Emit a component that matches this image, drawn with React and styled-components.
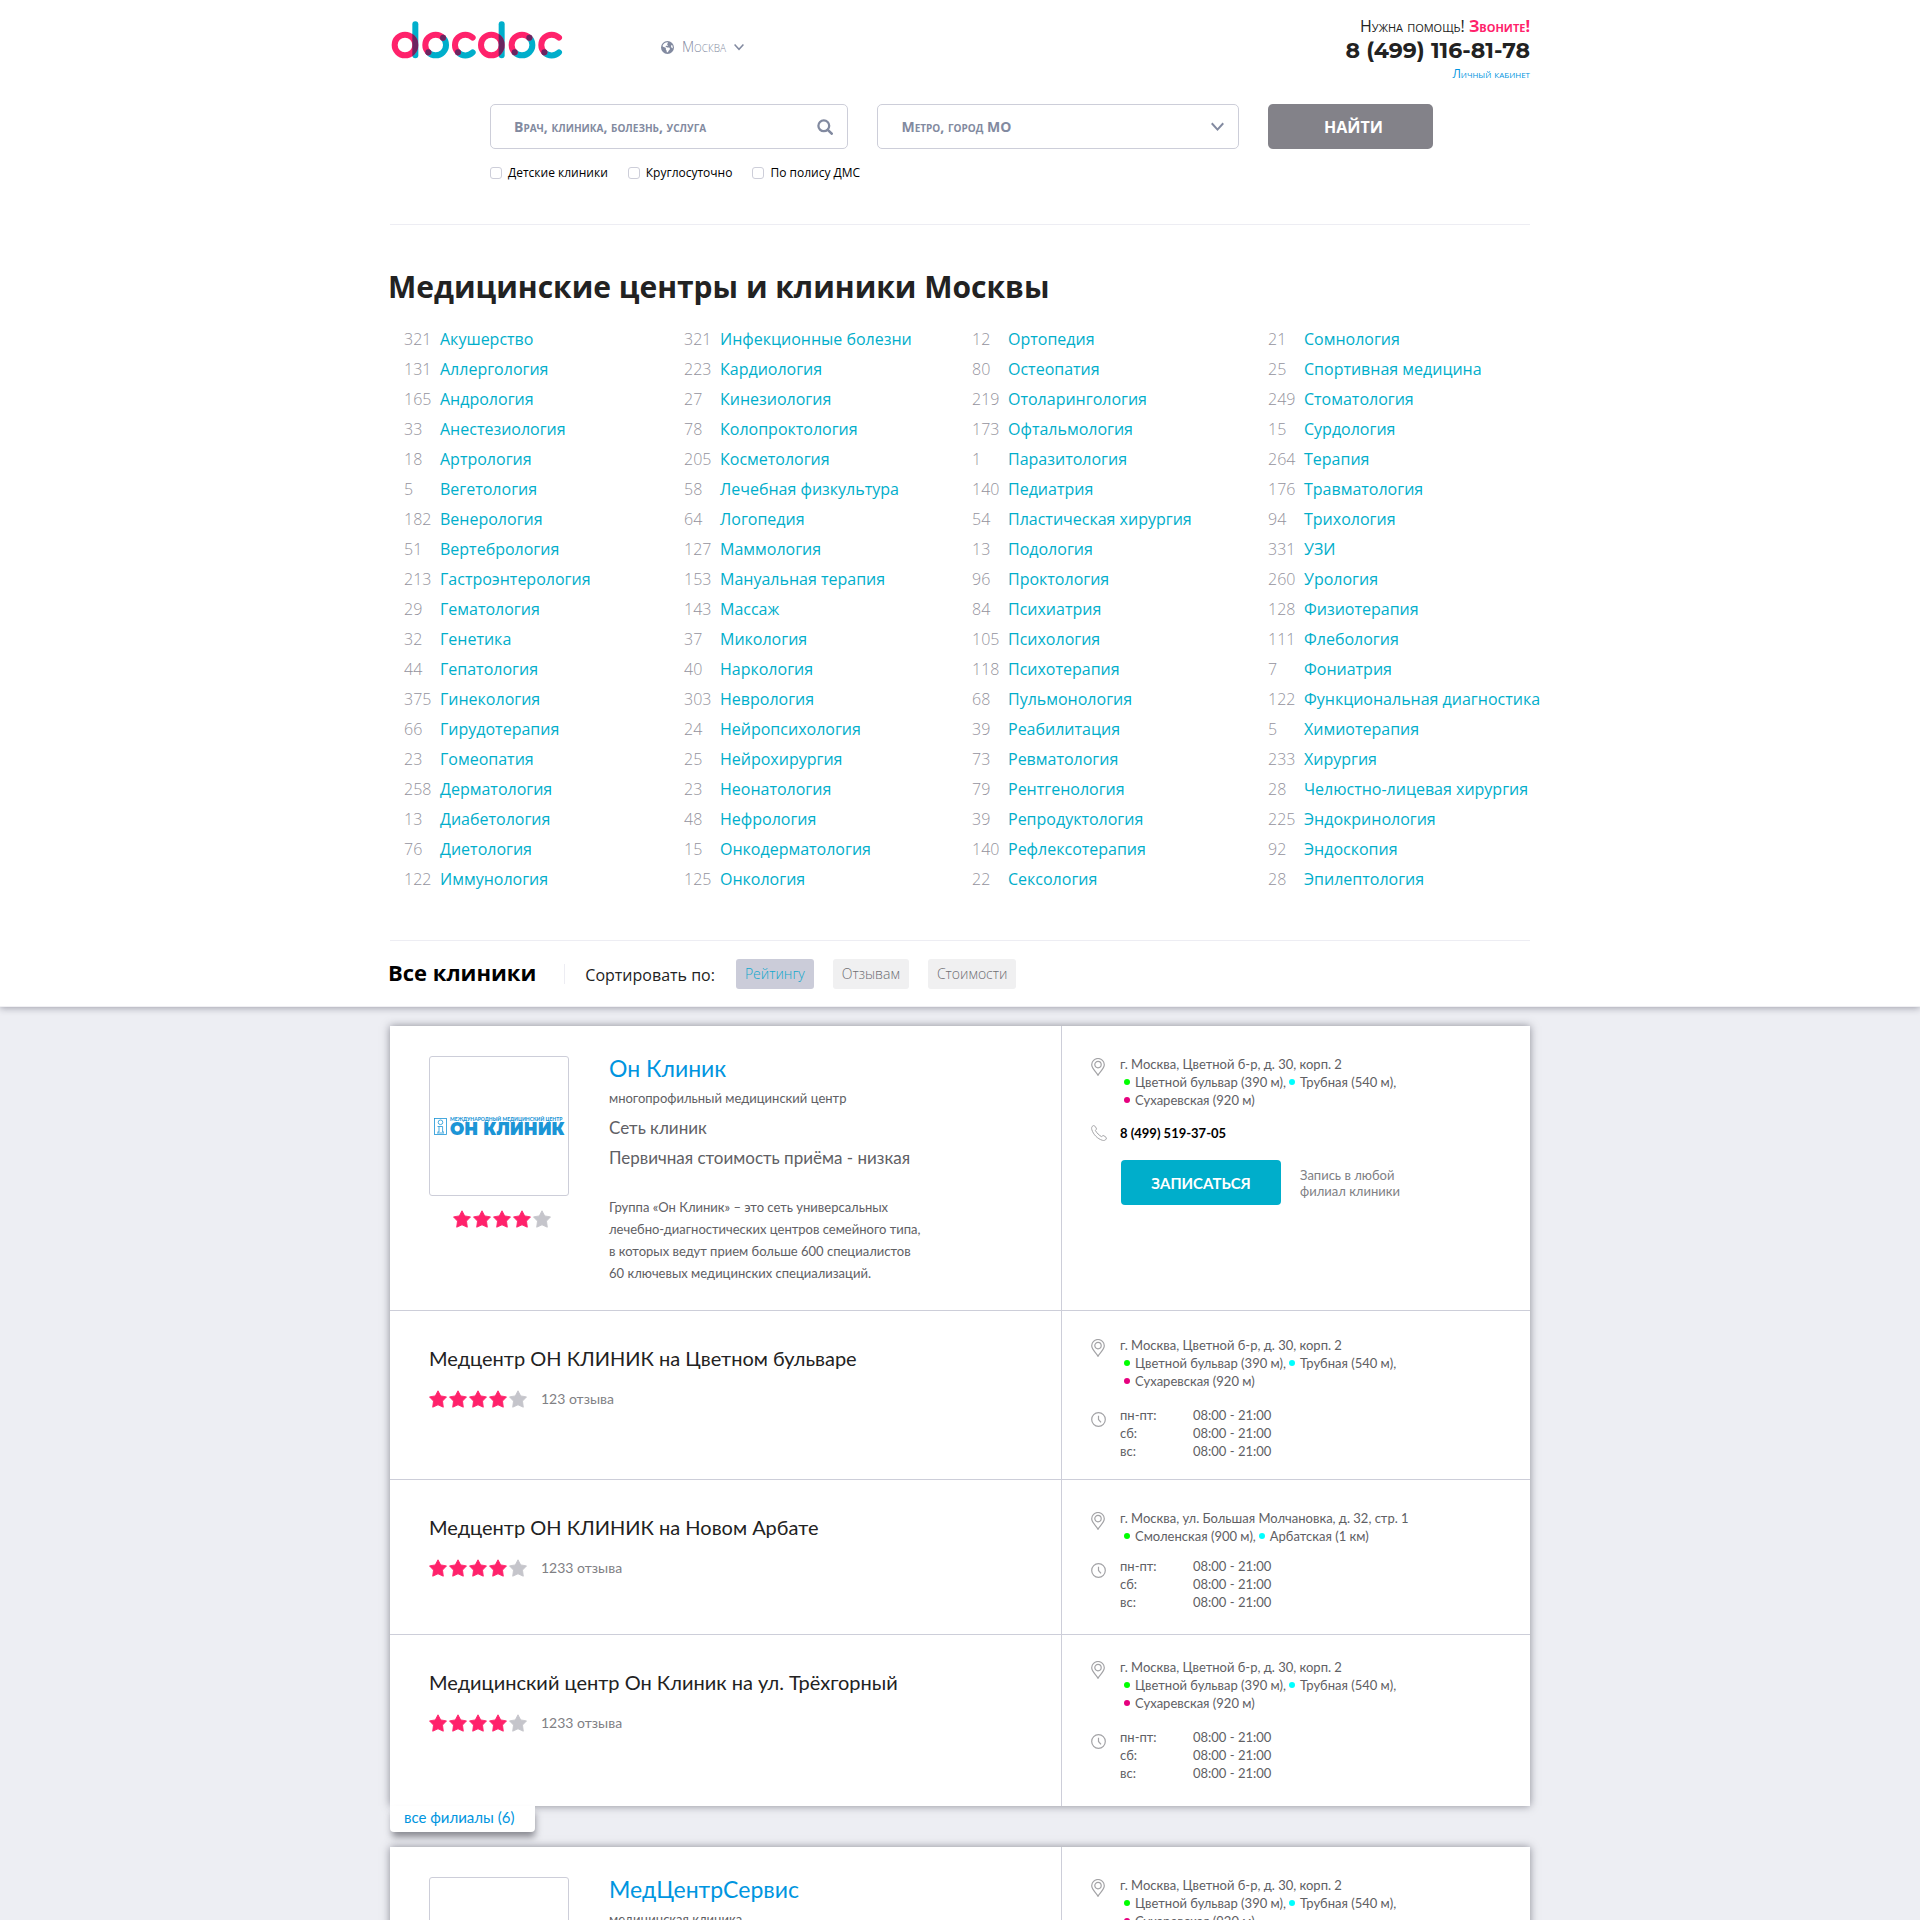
import React from "react";
import styled, { createGlobalStyle } from "styled-components";
import { FaEarthAmericas } from "react-icons/fa6";

const color = {
  pink: "#ff226b",
  teal: "#00aecb",
  plum: "#6b2560",
  blue: "#0095e0",
  slate: "#828aa0",
  line: "#cdced9",
  text: "#606064",
  muted: "#808084",
  ink: "#222222",
};
const sans = `"Open Sans", "Noto Sans", sans-serif`;
const humanist = `Lato, Carlito, "Open Sans", sans-serif`;

const GlobalStyle = createGlobalStyle`
  *, *::before, *::after { box-sizing: border-box; }
  html { scrollbar-width: none; }
  body { margin: 0; background: #edeef3; font-family: ${sans}; color: ${color.ink}; }
  h1, h2, h3, p, ul, dl, dd { margin: 0; padding: 0; }
  ul { list-style: none; }
  a { color: inherit; text-decoration: none; }
  button, input, select { font: inherit; }
`;

/* ---------- page shell ---------- */

const Top = styled.div`
  background: #fff;
  border-bottom: 1px solid #f0f0f3;
  box-shadow: 0 1px 7px rgba(40, 40, 60, 0.4);
`;

const Container = styled.div`
  max-width: 1140px;
  margin: 0 auto;
`;

const Rule = styled.hr`
  margin: 0;
  border: 0;
  border-top: 1px solid #ededf3;
`;

/* ---------- header ---------- */

const Header = styled.header`
  display: flex;
  align-items: flex-start;
  padding-top: 16px;
`;

const LogoLink = styled.a`
  display: block;
  margin: 5px 98px 0 1px;

  svg { display: block; }
`;

const CityButton = styled.button`
  display: flex;
  align-items: center;
  gap: 8px;
  margin-top: 20px;
  padding: 0;
  border: 0;
  background: none;
  color: ${color.slate};
  font-size: 14px;
  line-height: 22px;
  font-weight: 300;
  font-variant: small-caps;

  svg { display: block; }
`;

const Contacts = styled.address`
  margin-left: auto;
  text-align: right;
  font-style: normal;
`;

const Help = styled.p`
  font-size: 16px;
  line-height: 21px;
  font-variant: small-caps;

  strong { font-weight: 700; color: ${color.pink}; }
`;

const Phone = styled.a`
  display: block;
  font-family: Montserrat, Lato, sans-serif;
  font-size: 22px;
  line-height: 28px;
  font-weight: 700;
`;

const AccountLink = styled.a`
  display: block;
  font-size: 12px;
  line-height: 18px;
  font-variant: small-caps;
  color: ${color.blue};
`;

/* ---------- search ---------- */

const SearchForm = styled.form`
  padding: 21px 97px 41px 100px;
`;

const SearchRow = styled.div`
  display: grid;
  grid-template-columns: 358fr 361fr 165px;
  gap: 29px;
`;

const Field = styled.label`
  display: flex;
  align-items: center;
  height: 45px;
  padding-right: 14px;
  border: 1px solid ${color.line};
  border-radius: 5px;
  color: ${color.slate};

  svg { display: block; flex: none; }
`;

const fieldText = `
  flex: 1;
  min-width: 0;
  height: 43px;
  padding: 0 0 0 23px;
  border: 0;
  outline: 0;
  background: none;
  color: inherit;
  font-size: 14px;
  font-weight: 700;
  font-variant: small-caps;
`;

const TextInput = styled.input`
  ${fieldText}
  &::placeholder { color: inherit; opacity: 1; }
`;

const Select = styled.select`
  ${fieldText}
  appearance: none;
`;

const FindButton = styled.button`
  height: 45px;
  padding: 0 0 0 6px;
  border: 0;
  border-radius: 5px;
  background: #838289;
  color: #fff;
  font-size: 16px;
  font-weight: 700;
`;

const Filters = styled.div`
  display: flex;
  gap: 20px;
  margin-top: 14px;
`;

const CheckLabel = styled.label`
  display: flex;
  align-items: center;
  gap: 6px;
  font-size: 12px;
  line-height: 20px;
  color: #000;
`;

const Checkbox = styled.input.attrs({ type: "checkbox" })`
  appearance: none;
  width: 12px;
  height: 12px;
  margin: 0;
  border: 1px solid ${color.line};
  border-radius: 3px;
  background: #fff;

  &:checked { background: ${color.teal}; }
`;

/* ---------- specialities ---------- */

const PageTitle = styled.h1`
  margin: 42px 0 17px -2px;
  font-size: 30px;
  line-height: 40px;
  font-weight: 700;
`;

const Columns = styled.div`
  display: grid;
  grid-template-columns: minmax(0, 280fr) minmax(0, 288fr) minmax(0, 296fr) minmax(0, 262fr);
  padding: 0 0 46px 14px;
`;

const Speciality = styled.li`
  display: grid;
  grid-template-columns: 36px 1fr;
  font-size: 16px;
  line-height: 30px;
  white-space: nowrap;
  color: ${color.teal};
`;

const Count = styled.span`
  font-weight: 300;
  color: #94939d;
`;

/* ---------- sort bar ---------- */

const SortBar = styled.div`
  display: flex;
  align-items: center;
  height: 65px;
`;

const SortTitles = styled.div`
  display: flex;
  align-items: baseline;
  line-height: 30px;
`;

const ListTitle = styled.h2`
  margin-left: -2px;
  font-size: 22px;
  font-weight: 700;
  color: #000;
`;

const Divider = styled.span`
  align-self: center;
  height: 20px;
  margin: 0 20px 0 28px;
  border-left: 1px solid #ededf3;
`;

const SortLabel = styled.span`
  margin-right: 21px;
  font-size: 16px;
`;

const SortOptions = styled.div`
  display: flex;
  gap: 19px;
`;

const SortButton = styled.button`
  height: 30px;
  padding: 0 9px;
  border: 0;
  border-radius: 3px;
  background: ${(p) => (p.$active ? "#cbccd9" : "#f0f0f1")};
  color: ${(p) => (p.$active ? "#10a8cc" : "#6e6e73")};
  font-size: 14px;
  line-height: 30px;
  font-weight: 300;
`;

/* ---------- clinic cards ---------- */

const Results = styled(Container).attrs({ as: "main" })`
  padding: 19px 0 20px;
  font-family: ${humanist};
`;

const Card = styled.article`
  background: #fff;
  box-shadow: 0 0 8px rgba(40, 40, 55, 0.5);
`;

const CardGroup = styled.section`
  & + & { margin-top: 15px; }
`;

const Row = styled.div`
  display: grid;
  grid-template-columns: 671fr 469fr;

  & + & { border-top: 1px solid ${color.line}; }
`;

const Summary = styled.div`
  display: flex;
  gap: 40px;
  padding: 30px 20px 26px 39px;
`;

const LogoColumn = styled.div`
  flex: none;
  width: 140px;
`;

const LogoFrame = styled.div`
  display: grid;
  place-items: center;
  height: 140px;
  margin-bottom: 14px;
  border: 1px solid ${color.line};
  border-radius: 3px;
`;

const LogoStars = styled.div`
  padding-left: 24px;
`;

const StarRow = styled.div`
  display: flex;
  gap: 2px;

  svg { display: block; }
`;

const ClinicName = styled.h3`
  font-size: 23px;
  line-height: 24px;
  font-weight: 400;
  color: ${color.blue};
`;

const Kind = styled.p`
  margin: 7px 0 4px;
  font-size: 13px;
  line-height: 22px;
  color: ${color.text};
`;

const Fact = styled.p`
  font-size: 17px;
  line-height: 30px;
  color: ${color.text};
`;

const About = styled.p`
  max-width: 320px;
  margin-top: 23px;
  font-size: 13px;
  line-height: 22px;
  color: ${color.text};
  white-space: pre-line;
`;

const Branch = styled.div`
  padding: 35px 20px 35px 39px;
`;

const BranchName = styled.h3`
  margin-bottom: 20px;
  font-size: 20px;
  line-height: 24px;
  font-weight: 400;
`;

const Rating = styled.div`
  display: flex;
  align-items: center;
  gap: 14px;
`;

const Reviews = styled.a`
  font-size: 14px;
  line-height: 18px;
  color: ${color.muted};
`;

const Details = styled.div`
  display: flex;
  flex-direction: column;
  gap: ${(p) => p.$gap}px;
  padding: ${(p) => p.$top}px 20px ${(p) => p.$bottom}px 29px;
  border-left: 1px solid ${color.line};
  font-size: 13px;
  line-height: 18px;
  color: ${color.text};
`;

const Detail = styled.div`
  display: grid;
  grid-template-columns: 29px 1fr;
  align-items: start;

  > svg { display: block; margin-top: ${(p) => p.$drop}px; }
`;

const Stations = styled.ul`
  display: flex;
  flex-wrap: wrap;
  max-width: 310px;
  padding-left: 4px;
  column-gap: 3px;
`;

const Station = styled.li`
  display: flex;
  align-items: center;
  gap: 5px;

  &::before {
    content: "";
    width: 6px;
    height: 6px;
    border-radius: 50%;
    background: ${(p) => p.$color};
  }
`;

const CardPhone = styled.a`
  font-weight: 700;
  color: #000;
`;

const Booking = styled.div`
  display: flex;
  align-items: center;
  gap: 19px;
  padding: 3px 0 0 30px;
`;

const BookButton = styled.button`
  width: 160px;
  height: 45px;
  border: 0;
  border-radius: 4px;
  background: ${color.teal};
  color: #fff;
  font-size: 15px;
  font-weight: 700;
`;

const BookNote = styled.p`
  max-width: 110px;
  line-height: 16px;
  color: ${color.muted};
`;

const Hours = styled.dl`
  display: grid;
  grid-template-columns: 73px 1fr;
`;

const BranchesLink = styled.a`
  display: block;
  width: fit-content;
  padding: 0 21px 4px 14px;
  border-radius: 0 0 4px 4px;
  background: #fff;
  box-shadow: 1px 6px 7px -1px rgba(40, 40, 50, 0.5);
  font-size: 15px;
  line-height: 22px;
  color: ${color.blue};
`;

/* ---------- drawings ---------- */

function LetterD({ cx, id }) {
  return (
    <g fill="none" strokeWidth="18" strokeLinecap="round">
      <clipPath id={id}>
        <rect x={cx + 22} y="30" width="18" height="116" />
      </clipPath>
      <path d={`M${cx + 31} 42V135`} stroke={color.teal} />
      <circle cx={cx} cy="104" r="31" stroke={color.pink} />
      <circle cx={cx} cy="104" r="31" stroke={color.plum} clipPath={`url(#${id})`} />
    </g>
  );
}

function LetterO({ cx }) {
  return (
    <g fill="none" strokeWidth="18" strokeLinecap="round">
      <path d={`M${cx - 22} 126A31 31 0 0 0 ${cx + 22} 82`} stroke={color.teal} />
      <path d={`M${cx + 22} 82A31 31 0 0 0 ${cx - 22} 126`} stroke={color.pink} />
      <circle cx={cx + 22} cy="82" r="9" fill={color.plum} />
      <circle cx={cx - 22} cy="126" r="9" fill={color.plum} />
    </g>
  );
}

function LetterC({ cx }) {
  return (
    <g fill="none" strokeWidth="18" strokeLinecap="round">
      <path d={`M${cx - 22} 126A31 31 0 0 0 ${cx + 22} 126`} stroke={color.teal} />
      <path d={`M${cx + 22} 82A31 31 0 0 0 ${cx - 22} 126`} stroke={color.pink} />
      <circle cx={cx - 22} cy="126" r="9" fill={color.plum} />
    </g>
  );
}

function DocdocLogo() {
  return (
    <svg width="172" height="38" viewBox="20 32 516 114" role="img" aria-label="docdoc">
      <LetterD cx={62} id="stem-a" />
      <LetterO cx={154} />
      <LetterC cx={243} />
      <LetterD cx={321} id="stem-b" />
      <LetterO cx={413} />
      <LetterC cx={502} />
    </svg>
  );
}

function Chevron({ size }) {
  return (
    <svg width={size} height={size} viewBox="0 0 12 12" fill="none" stroke="currentColor" strokeWidth="1.8" aria-hidden="true">
      <path d="M.7 3 6 8.800l5.300-5.800" />
    </svg>
  );
}

function SearchIcon() {
  return (
    <svg width="16" height="16" viewBox="0 0 16 16" fill="none" stroke="currentColor" aria-hidden="true">
      <circle cx="6.8" cy="6.8" r="5.4" strokeWidth="2.3" />
      <path d="m10.8 10.8 3.9 3.9" strokeWidth="2.6" strokeLinecap="round" />
    </svg>
  );
}

function PinIcon() {
  return (
    <svg width="14" height="18" viewBox="0 0 14 18" fill="none" stroke="#a3a3a6" strokeWidth="1.2" aria-hidden="true">
      <path d="M7 17.2C6 14.6.7 10.6.7 6.7A6.2 6.1 0 0 1 13.3 6.7C13.3 10.6 8 14.6 7 17.2Z" />
      <circle cx="7" cy="6.6" r="3.2" />
    </svg>
  );
}

function PhoneIcon() {
  return (
    <svg width="16" height="16" viewBox="0 0 16 16" fill="none" stroke="#a3a3a6" strokeWidth="1" strokeLinejoin="round" aria-hidden="true">
      <path d="M2 .8C.7 1.5.3 3 .8 4.6 2.3 9.5 6.5 13.8 11.4 15.3 13 15.8 14.5 15.3 15.2 14 15.5 13.3 15.5 12.8 15 12.3L13 10.8C12.4 10.4 11.8 10.5 11.3 11L10.5 11.6C8.3 10.5 5.6 7.8 4.4 5.5L5.1 4.7C5.5 4.2 5.6 3.6 5.2 3L3.8 1.1C3.3.5 2.6.4 2 .8Z" />
    </svg>
  );
}

function ClockIcon() {
  return (
    <svg width="15" height="15" viewBox="0 0 15 15" fill="none" stroke="#a3a3a6" strokeWidth="1.2" aria-hidden="true">
      <circle cx="7.5" cy="7.5" r="6.8" />
      <path d="M7.5 3.8V7.5L10 10.3" />
    </svg>
  );
}

function Stars({ value }) {
  return (
    <StarRow role="img" aria-label={`${value} из 5`}>
      {[1, 2, 3, 4, 5].map((n) => (
        <svg key={n} width="18" height="18" viewBox="0 0 18 18" aria-hidden="true">
          <path
            d="M9 .8 11.7 5.9 17.5 6.9 13.5 11.1 14.3 17.2 9 14.8 3.700 17.2 4.5 11.1.5 6.9 6.3 5.9Z"
            fill={n <= value ? color.pink : "#c5c5cb"}
            stroke={n <= value ? color.pink : "#c5c5cb"}
            strokeWidth="0.9"
            strokeLinejoin="round"
          />
        </svg>
      ))}
    </StarRow>
  );
}

function OnClinicLogo() {
  return (
    <svg width="132" height="32" viewBox="0 0 132 32" fill="#1b95d6" aria-hidden="true">
      <g fill="none" stroke="#1b95d6" strokeWidth="0.8">
        <rect x="1.5" y="8.5" width="12" height="16" />
        <circle cx="7.5" cy="12.300" r="2.3" />
        <path d="M4.5 16.500H9.6V22H11M4 23H11M6 16.500V22H4.5" />
      </g>
      <text x="17" y="11" fontFamily="Lato, sans-serif" fontWeight="900" fontSize="5">
        МЕЖДУНАРОДНЫЙ МЕДИЦИНСКИЙ ЦЕНТР
      </text>
      <text x="17" y="25" fontFamily="Montserrat, Lato, sans-serif" fontWeight="900" fontSize="17">
        ОН КЛИНИК
      </text>
    </svg>
  );
}

/* ---------- data ---------- */

const specialities = [
  [
    [321, "Акушерство"], [131, "Аллергология"], [165, "Андрология"], [33, "Анестезиология"],
    [18, "Артрология"], [5, "Вегетология"], [182, "Венерология"], [51, "Вертебрология"],
    [213, "Гастроэнтерология"], [29, "Гематология"], [32, "Генетика"], [44, "Гепатология"],
    [375, "Гинекология"], [66, "Гирудотерапия"], [23, "Гомеопатия"], [258, "Дерматология"],
    [13, "Диабетология"], [76, "Диетология"], [122, "Иммунология"],
  ],
  [
    [321, "Инфекционные болезни"], [223, "Кардиология"], [27, "Кинезиология"], [78, "Колопроктология"],
    [205, "Косметология"], [58, "Лечебная физкультура"], [64, "Логопедия"], [127, "Маммология"],
    [153, "Мануальная терапия"], [143, "Массаж"], [37, "Микология"], [40, "Наркология"],
    [303, "Неврология"], [24, "Нейропсихология"], [25, "Нейрохирургия"], [23, "Неонатология"],
    [48, "Нефрология"], [15, "Онкодерматология"], [125, "Онкология"],
  ],
  [
    [12, "Ортопедия"], [80, "Остеопатия"], [219, "Отоларингология"], [173, "Офтальмология"],
    [1, "Паразитология"], [140, "Педиатрия"], [54, "Пластическая хирургия"], [13, "Подология"],
    [96, "Проктология"], [84, "Психиатрия"], [105, "Психология"], [118, "Психотерапия"],
    [68, "Пульмонология"], [39, "Реабилитация"], [73, "Ревматология"], [79, "Рентгенология"],
    [39, "Репродуктология"], [140, "Рефлексотерапия"], [22, "Сексология"],
  ],
  [
    [21, "Сомнология"], [25, "Спортивная медицина"], [249, "Стоматология"], [15, "Сурдология"],
    [264, "Терапия"], [176, "Травматология"], [94, "Трихология"], [331, "УЗИ"],
    [260, "Урология"], [128, "Физиотерапия"], [111, "Флебология"], [7, "Фониатрия"],
    [122, "Функциональная диагностика"], [5, "Химиотерапия"], [233, "Хирургия"],
    [28, "Челюстно-лицевая хирургия"], [225, "Эндокринология"], [92, "Эндоскопия"], [28, "Эпилептология"],
  ],
];

const green = "#00ff00";
const cyan = "#00ffff";
const magenta = "#e6007e";

const tsvetnoy = {
  address: "г. Москва, Цветной б-р, д. 30, корп. 2",
  stations: [
    [green, "Цветной бульвар (390 м),"],
    [cyan, "Трубная (540 м),"],
    [magenta, "Сухаревская (920 м)"],
  ],
};

const arbat = {
  address: "г. Москва, ул. Большая Молчановка, д. 32, стр. 1",
  stations: [
    [green, "Смоленская (900 м),"],
    [cyan, "Арбатская (1 км)"],
  ],
};

const branches = [
  { name: "Медцентр ОН КЛИНИК на Цветном бульваре", reviews: "123 отзыва", place: tsvetnoy, top: 25, gap: 16, bottom: 19 },
  { name: "Медцентр ОН КЛИНИК на Новом Арбате", reviews: "1233 отзыва", place: arbat, top: 29, gap: 12, bottom: 23 },
  { name: "Медицинский центр Он Клиник на ул. Трёхгорный", reviews: "1233 отзыва", place: tsvetnoy, top: 23, gap: 16, bottom: 24 },
];

const week = [["пн-пт:", "08:00 - 21:00"], ["сб:", "08:00 - 21:00"], ["вс:", "08:00 - 21:00"]];

/* ---------- blocks ---------- */

function Place({ place }) {
  return (
    <Detail $drop={3}>
      <PinIcon />
      <div>
        <p>{place.address}</p>
        <Stations>
          {place.stations.map(([dot, label]) => (
            <Station key={label} $color={dot}>{label}</Station>
          ))}
        </Stations>
      </div>
    </Detail>
  );
}

function ClinicRow({ name, kind, facts = [], about, logo, rating, place, phone }) {
  return (
    <Row>
      <Summary>
        <LogoColumn>
          <LogoFrame>{logo}</LogoFrame>
          {rating && <LogoStars><Stars value={rating} /></LogoStars>}
        </LogoColumn>
        <div>
          <ClinicName><a href="#clinic">{name}</a></ClinicName>
          <Kind>{kind}</Kind>
          {facts.map((fact) => <Fact key={fact}>{fact}</Fact>)}
          {about && <About>{about}</About>}
        </div>
      </Summary>
      <Details $top={29} $gap={15} $bottom={20}>
        <Place place={place} />
        {phone && (
          <>
            <Detail $drop={1}>
              <PhoneIcon />
              <CardPhone href="tel:84995193705">{phone}</CardPhone>
            </Detail>
            <Booking>
              <BookButton type="button">ЗАПИСАТЬСЯ</BookButton>
              <BookNote>Запись в любой филиал клиники</BookNote>
            </Booking>
          </>
        )}
      </Details>
    </Row>
  );
}

function BranchRow({ branch }) {
  return (
    <Row>
      <Branch>
        <BranchName>{branch.name}</BranchName>
        <Rating>
          <Stars value={4} />
          <Reviews href="#reviews">{branch.reviews}</Reviews>
        </Rating>
      </Branch>
      <Details $top={branch.top} $gap={branch.gap} $bottom={branch.bottom}>
        <Place place={branch.place} />
        <Detail $drop={6}>
          <ClockIcon />
          <Hours>
            {week.map(([day, time]) => (
              <React.Fragment key={day}>
                <dt>{day}</dt>
                <dd>{time}</dd>
              </React.Fragment>
            ))}
          </Hours>
        </Detail>
      </Details>
    </Row>
  );
}

export default function App() {
  return (
    <>
      <GlobalStyle />
      <Top>
        <Container>
          <Header>
            <LogoLink href="#home"><DocdocLogo /></LogoLink>
            <CityButton type="button">
              <FaEarthAmericas size={13} />
              Москва
              <Chevron size={10} />
            </CityButton>
            <Contacts>
              <Help>Нужна помощь! <strong>Звоните!</strong></Help>
              <Phone href="tel:84991168178">8 (499) 116-81-78</Phone>
              <AccountLink href="#account">Личный кабинет</AccountLink>
            </Contacts>
          </Header>

          <SearchForm>
            <SearchRow>
              <Field>
                <TextInput type="text" aria-label="Поиск" placeholder="Врач, клиника, болезнь, услуга" />
                <SearchIcon />
              </Field>
              <Field>
                <Select aria-label="Место" defaultValue="any">
                  <option value="any">Метро, город МО</option>
                </Select>
                <Chevron size={13} />
              </Field>
              <FindButton type="button">НАЙТИ</FindButton>
            </SearchRow>
            <Filters>
              {["Детские клиники", "Круглосуточно", "По полису ДМС"].map((label) => (
                <CheckLabel key={label}>
                  <Checkbox />
                  {label}
                </CheckLabel>
              ))}
            </Filters>
          </SearchForm>

          <Rule />
          <PageTitle>Медицинские центры и клиники Москвы</PageTitle>
          <Columns>
            {specialities.map((column, i) => (
              <ul key={i}>
                {column.map(([count, name]) => (
                  <Speciality key={name}>
                    <Count>{count}</Count>
                    <a href="#speciality">{name}</a>
                  </Speciality>
                ))}
              </ul>
            ))}
          </Columns>

          <Rule />
          <SortBar>
            <SortTitles>
              <ListTitle>Все клиники</ListTitle>
              <Divider />
              <SortLabel>Сортировать по:</SortLabel>
            </SortTitles>
            <SortOptions>
              <SortButton type="button" $active>Рейтингу</SortButton>
              <SortButton type="button">Отзывам</SortButton>
              <SortButton type="button">Стоимости</SortButton>
            </SortOptions>
          </SortBar>
        </Container>
      </Top>

      <Results>
        <CardGroup>
          <Card>
            <ClinicRow
              name="Он Клиник"
              kind="многопрофильный медицинский центр"
              facts={["Сеть клиник", "Первичная стоимость приёма - низкая"]}
              about={"Группа «Он Клиник» – это сеть универсальных\nлечебно-диагностических центров семейного типа,\nв которых ведут прием больше 600 специалистов\n60 ключевых медицинских специализаций."}
              logo={<OnClinicLogo />}
              rating={4}
              place={tsvetnoy}
              phone="8 (499) 519-37-05"
            />
            {branches.map((branch) => <BranchRow key={branch.name} branch={branch} />)}
          </Card>
          <BranchesLink href="#branches">все филиалы (6)</BranchesLink>
        </CardGroup>
        <CardGroup>
          <Card>
            <ClinicRow name="МедЦентрСервис" kind="медицинская клиника" place={tsvetnoy} />
          </Card>
        </CardGroup>
      </Results>
    </>
  );
}
